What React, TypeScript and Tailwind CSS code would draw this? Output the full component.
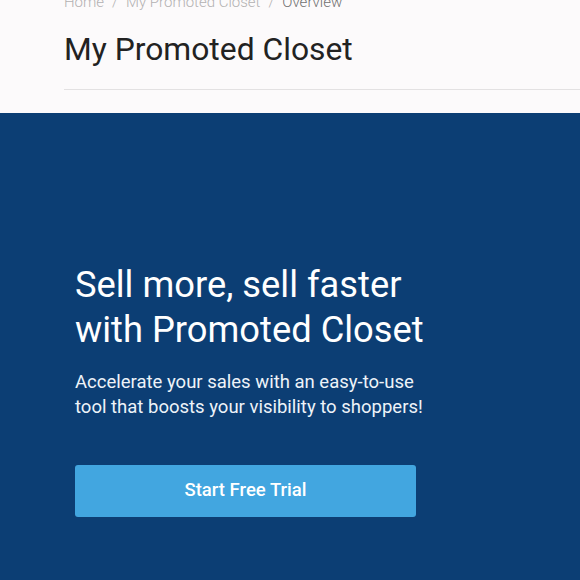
export default function App() {
  return (
    <div className="min-h-[580px] bg-[#0c3e74] font-['Roboto',sans-serif]">
      <div className="bg-[#fcfafb] pl-16 pb-[23px]">
        <nav className="-mt-[8px] flex gap-2 text-[15px] leading-5 font-light text-[#b3b1b2]">
          <span>Home</span>
          <span>/</span>
          <span>My Promoted Closet</span>
          <span>/</span>
          <span className="text-[#707070]">Overview</span>
        </nav>
        <h1 className="mt-[17px] text-[31.8px] leading-10 text-[#222]">My Promoted Closet</h1>
        <div className="mt-5 h-px bg-[#e3e1e2]" />
      </div>
      <section className="px-[75px] pt-[149px] pb-16 text-white">
        <h2 className="text-[36.3px] leading-[45px]">
          Sell more, sell faster
          <br />
          with Promoted Closet
        </h2>
        <p className="mt-[18px] text-[18.5px] leading-[25px] text-[#eef3f9]">
          Accelerate your sales with an easy-to-use
          <br />
          tool that boosts your visibility to shoppers!
        </p>
        <button className="mt-[45px] h-[52px] w-[341px] rounded-[3px] bg-[#42a6e0] text-[18.5px] font-medium">
          Start Free Trial
        </button>
      </section>
    </div>
  );
}
